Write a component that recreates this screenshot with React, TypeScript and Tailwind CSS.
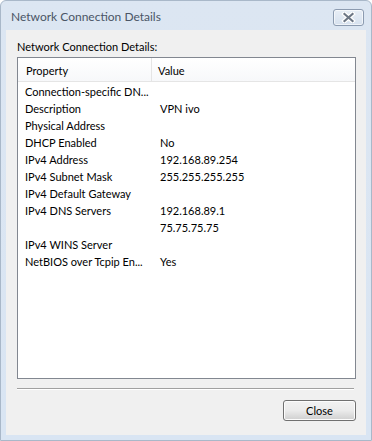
import React from 'react';

const rows: [string, string][] = [
  ['Connection-specific DN...', ''],
  ['Description', 'VPN ivo'],
  ['Physical Address', ''],
  ['DHCP Enabled', 'No'],
  ['IPv4 Address', '192.168.89.254'],
  ['IPv4 Subnet Mask', '255.255.255.255'],
  ['IPv4 Default Gateway', ''],
  ['IPv4 DNS Servers', '192.168.89.1'],
  ['', '75.75.75.75'],
  ['IPv4 WINS Server', ''],
  ['NetBIOS over Tcpip En...', 'Yes'],
];

function CaptionClose() {
  return (
    <div className="w-[31px] h-[17px] rounded-[3px] border border-[#8c9bb0] bg-gradient-to-b from-[#e8eef6] to-[#d6e1ee] flex items-center justify-center shadow-[inset_0_0_0_1px_rgba(255,255,255,0.6)]">
      <svg width="15" height="11" viewBox="0 0 15 11">
        <path d="M3.5 2 L11.5 9 M11.5 2 L3.5 9" stroke="#ffffff" strokeWidth="4.5" strokeLinecap="square" />
        <path d="M3.5 2 L11.5 9 M11.5 2 L3.5 9" stroke="#6d7785" strokeWidth="2.2" strokeLinecap="square" />
      </svg>
    </div>
  );
}

export default function App() {
  return (
    <div
      className="w-[372px] h-[441px] bg-gradient-to-b from-[#dce6f2] to-[#d9e5f3] border border-[#a9b8c9] rounded-t-[6px] flex flex-col overflow-hidden"
      style={{ fontFamily: '"Segoe UI", Lato, "Noto Sans", sans-serif' }}
    >
      <div className="h-[29px] flex items-start justify-between pl-[10px] pr-[7px]">
        <span className="mt-[8px] text-[12px] leading-[16px] text-[#4a5566]">Network Connection Details</span>
        <div className="mt-[8px]">
          <CaptionClose />
        </div>
      </div>

      <div className="mx-[5px] h-[405px] bg-[#f0f0f0] flex flex-col pt-[9px] pl-[11px] pr-[10px] text-[11px] text-black">
        <div className="h-[15px] leading-[15px] mb-[3px]">Network Connection Details:</div>

        <div className="w-[339px] h-[322px] border border-[#828790] bg-white flex flex-col">
          <div className="h-[24px] flex border-b border-[#e5e5e5] bg-gradient-to-b from-white to-[#f7f8fa]">
            <div className="w-[134px] border-r border-[#e5e5e5] pl-[8px] flex items-center pt-[3px]">Property</div>
            <div className="pl-[6px] flex items-center pt-[3px]">Value</div>
          </div>
          <div className="pt-[2px] flex flex-col">
            {rows.map(([prop, val], i) => (
              <div key={i} className="h-[17px] flex items-center">
                <div className="w-[135px] pl-[7px] whitespace-nowrap">{prop}</div>
                <div className="pl-[7px] whitespace-nowrap">{val}</div>
              </div>
            ))}
          </div>
        </div>

        <div className="mt-[9px] w-[337px] h-px bg-[#a0a0a0]" />
        <div className="w-[337px] h-px bg-white" />

        <div className="mt-[10px] self-end">
          <button className="w-[73px] h-[21px] rounded-[3px] border border-[#707070] bg-gradient-to-b from-[#f2f2f2] via-[#ebebeb] to-[#cfcfcf] text-[11px] leading-none text-black shadow-[inset_0_0_0_1px_#fcfcfc]">
            Close
          </button>
        </div>
      </div>
    </div>
  );
}
